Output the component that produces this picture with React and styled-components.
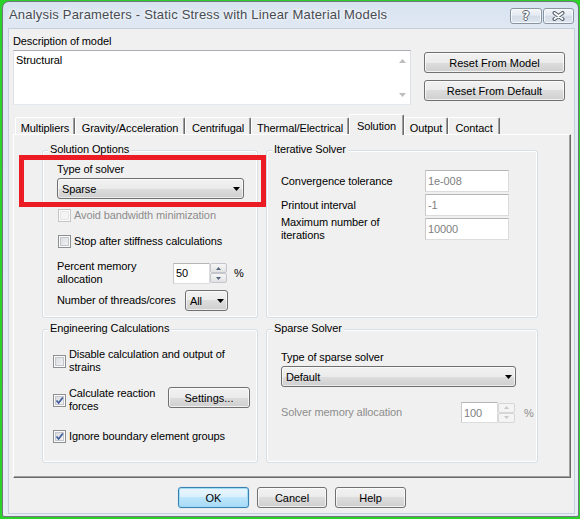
import React from 'react';
import styled, { createGlobalStyle } from 'styled-components';

const GlobalStyle = createGlobalStyle`
  html, body {
    margin: 0;
    padding: 0;
  }
  body {
    background: #2ad22a;
    font-family: "Liberation Sans", Arial, sans-serif;
    font-size: 11px;
    letter-spacing: -0.1px;
    color: #000;
    overflow: hidden;
  }
  * {
    box-sizing: border-box;
  }
`;

const Window = styled.div`
  width: 577px;
  height: 516px;
  margin: 1px 0 0 2px;
  display: flex;
  flex-direction: column;
  border: 1px solid #6f767d;
  border-radius: 7px 7px 2px 2px;
  background: linear-gradient(180deg, #d8e3f0 0px, #dfe8f3 26px, #e7edf5 100%);
`;

const TitleBar = styled.div`
  height: 26px;
  flex: none;
  display: flex;
  align-items: flex-start;
  padding-left: 6px;
`;

const Title = styled.div`
  margin-top: 5px;
  font-size: 13px;
  line-height: 16px;
  letter-spacing: 0.2px;
  color: #474b52;
  text-shadow: 0 0 6px #fff, 0 0 3px #fff;
  white-space: nowrap;
`;

const CaptionButtons = styled.div`
  margin: 6px 4px 0 auto;
  display: flex;
  gap: 1px;
`;

const CaptionBtn = styled.div`
  width: ${p => p.$w}px;
  height: 16px;
  border: 1px solid #8994a3;
  border-radius: 3px;
  background: linear-gradient(#f2f5fa, #e4eaf2 45%, #d4dce7 50%, #dee5ee);
  box-shadow: inset 0 0 0 1px rgba(255, 255, 255, 0.7);
  display: flex;
  align-items: center;
  justify-content: center;
`;

const HelpGlyph = styled.span`
  font-family: "DejaVu Sans", sans-serif;
  font-weight: bold;
  font-size: 12px;
  line-height: 12px;
  color: #fff;
  text-shadow: 1px 0 #565f6b, -1px 0 #565f6b, 0 1px #565f6b, 0 -1px #565f6b;
`;

const Client = styled.div`
  flex: 1;
  margin: 0 3px 2px 5px;
  border: 1px solid #c6d0dc;
  background: #f0f0f0;
  padding: 6px 3px 0 4px;
  display: flex;
  flex-direction: column;
`;

const TopSection = styled.div`
  display: grid;
  grid-template-columns: 398px 141px;
  column-gap: 13px;
`;

const Label = styled.div`
  line-height: 13px;
  white-space: nowrap;
`;

const TextBox = styled.div`
  height: 55px;
  margin-top: 2px;
  display: flex;
  background: #fff;
  border: 1px solid;
  border-color: #abadb3 #dbdfe6 #e3e9ef #e2e3ea;
`;

const TextContent = styled.div`
  flex: 1;
  padding: 3px 0 0 2px;
  line-height: 13px;
`;

const ScrollCol = styled.div`
  width: 16px;
  display: flex;
  flex-direction: column;
  align-items: center;
  justify-content: space-between;
  padding: 8px 0 7px;
`;

const SideButtons = styled.div`
  display: flex;
  flex-direction: column;
  gap: 7px;
  padding-top: 17px;
`;

const Button = styled.button`
  width: ${p => p.$w}px;
  height: 21px;
  padding: 0;
  font: inherit;
  color: #000;
  display: flex;
  align-items: center;
  justify-content: center;
  border: 1px solid ${p => (p.$primary ? '#3c7fb1' : '#707070')};
  border-radius: 3px;
  background: ${p =>
    p.$primary
      ? 'linear-gradient(#eaf6fd 0%, #d9f0fc 50%, #bee6fd 50%, #a7d9f5 100%)'
      : 'linear-gradient(#f2f2f2 0%, #ebebeb 50%, #dddddd 50%, #cfcfcf 100%)'};
  box-shadow: ${p =>
    p.$primary
      ? 'inset 0 0 0 1px #9fdcf8, 0 0 1px #5fb8e8'
      : 'inset 0 0 0 1px rgba(255, 255, 255, 0.7)'};
`;

const TabStrip = styled.div`
  height: 21px;
  margin: 9px 0 -1px 2px;
  display: flex;
  align-items: flex-end;
  position: relative;
  z-index: 1;
`;

const Tab = styled.div`
  width: ${p => p.$w}px;
  height: ${p => (p.$active ? 21 : 17)}px;
  margin-bottom: ${p => (p.$active ? 0 : 1)}px;
  padding-top: ${p => (p.$active ? 5 : 4)}px;
  line-height: 13px;
  text-align: center;
  white-space: nowrap;
  background: #f0f0f0;
  border-top: 1px solid #fff;
  border-left: 1px solid #fff;
  border-right: 1px solid #696969;
  border-radius: 2px 2px 0 0;
  box-shadow: inset -1px 0 0 #a0a0a0;
`;

const Panel = styled.div`
  position: relative;
  width: 558px;
  height: 344px;
  border: 1px solid;
  border-color: #fff #696969 #696969 #fff;
  box-shadow: inset -1px -1px 0 #a0a0a0;
  padding: 15px 0 0 28px;
`;

const Highlight = styled.div`
  position: absolute;
  left: 5px;
  top: 20px;
  width: 247px;
  height: 52px;
  border: 5px solid #ec1c24;
  pointer-events: none;
`;

const GroupGrid = styled.div`
  display: grid;
  grid-template-columns: 216px 272px;
  grid-template-rows: 168px 134px;
  column-gap: 8px;
  row-gap: 11px;
`;

const Group = styled.div`
  display: flex;
  flex-direction: column;
  border: 1px solid #d5dfe5;
  border-radius: 3px;
  box-shadow: inset 0 0 0 1px #fff;
`;

const Caption = styled.div`
  align-self: flex-start;
  margin: -8px 0 0 5px;
  padding: 0 2px;
  line-height: 13px;
  background: #f0f0f0;
  white-space: nowrap;
`;

const GroupBody = styled.div`
  display: flex;
  flex-direction: column;
  align-items: flex-start;
  padding-left: ${p => p.$pad}px;
`;

const Row = styled.div`
  display: flex;
  align-items: ${p => p.$align || 'center'};
  margin-top: ${p => p.$mt || 0}px;
`;

const Text = styled.span`
  flex: none;
  width: ${p => (p.$w ? `${p.$w}px` : 'auto')};
  line-height: 13px;
  white-space: nowrap;
  color: ${p => (p.$dim ? '#8d8d8d' : 'inherit')};
`;

const Combo = styled.div`
  width: ${p => p.$w}px;
  height: 21px;
  flex: none;
  display: flex;
  align-items: center;
  justify-content: space-between;
  padding: 0 3px 0 4px;
  border: 1px solid #707070;
  border-radius: 3px;
  background: linear-gradient(#f2f2f2 0%, #ebebeb 50%, #dddddd 50%, #cfcfcf 100%);
  box-shadow: inset 0 0 0 1px rgba(255, 255, 255, 0.6);
`;

const Input = styled.div`
  width: ${p => p.$w}px;
  height: ${p => p.$h || 21}px;
  flex: none;
  display: flex;
  align-items: center;
  padding-left: 2px;
  background: #fff;
  color: ${p => (p.$muted ? '#808080' : '#000')};
  border: 1px solid;
  border-color: #b5b5b5 #dcdcdc #dcdcdc #c9c9c9;
`;

const Spin = styled.div`
  width: 17px;
  height: 20px;
  flex: none;
  display: flex;
  flex-direction: column;
`;

const SpinBtn = styled.span`
  flex: 1;
  display: flex;
  align-items: center;
  justify-content: center;
  border: 1px solid ${p => (p.$off ? '#d6d6d6' : '#c3c6cc')};
  border-radius: 2px;
  background: ${p => (p.$off ? '#f4f4f4' : 'linear-gradient(#f6f6f6, #e2e2e2)')};
`;

const Percent = styled.span`
  margin-left: ${p => p.$gap}px;
  color: ${p => (p.$dim ? '#8d8d8d' : 'inherit')};
`;

const FieldGrid = styled.div`
  display: grid;
  grid-template-columns: 144px 84px;
  grid-auto-rows: 22px;
  row-gap: 2px;
  align-items: center;
  margin-top: 14px;
`;

const CheckRow = styled.label`
  display: flex;
  align-items: center;
  gap: 3px;
  margin-top: ${p => p.$mt || 0}px;
  margin-left: ${p => p.$indent || 0}px;
  color: ${p => (p.$disabled ? '#8d8d8d' : '#000')};
`;

const Box = styled.span`
  width: 13px;
  height: 13px;
  flex: none;
  display: flex;
  align-items: center;
  justify-content: center;
  border: 1px solid ${p => (p.$disabled ? '#c5c5c5' : '#8e8f8f')};
  background: ${p =>
    p.$disabled ? '#f4f4f4' : 'linear-gradient(135deg, #d3d6da, #f8f8f8)'};
  box-shadow: inset 0 0 0 1px #fbfbfb, inset 0 0 0 2px ${p => (p.$disabled ? '#e6e6e6' : '#c3c7cd')};
`;

const Footer = styled.div`
  display: flex;
  justify-content: center;
  gap: 8px;
  margin-top: 9px;
`;

const Triangle = ({ down = true, w = 7, h = 4, color = '#000' }) => (
  <svg width={w} height={h} viewBox={`0 0 ${w} ${h}`}>
    <path d={down ? `M0 0H${w}L${w / 2} ${h}Z` : `M0 ${h}H${w}L${w / 2} 0Z`} fill={color} />
  </svg>
);

const CloseGlyph = () => (
  <svg width="13" height="10" viewBox="0 0 13 10">
    <path d="M2.5 2L10.5 8M10.5 2L2.5 8" stroke="#56606c" strokeWidth="4" strokeLinecap="round" />
    <path d="M2.5 2L10.5 8M10.5 2L2.5 8" stroke="#fff" strokeWidth="1.8" strokeLinecap="round" />
  </svg>
);

const CheckMark = () => (
  <svg width="9" height="9" viewBox="0 0 9 9">
    <path d="M1.5 4.5L3.6 7L7.8 1.5" fill="none" stroke="#3f5b9c" strokeWidth="1.7" />
  </svg>
);

const Checkbox = ({ checked, disabled, children, mt, indent }) => (
  <CheckRow $mt={mt} $indent={indent} $disabled={disabled}>
    <Box $disabled={disabled}>{checked && <CheckMark />}</Box>
    {children}
  </CheckRow>
);

const Spinner = ({ off }) => (
  <Spin>
    <SpinBtn $off={off}>
      <Triangle down={false} w={5} h={3} color={off ? '#c8c8c8' : '#56657f'} />
    </SpinBtn>
    <SpinBtn $off={off}>
      <Triangle w={5} h={3} color={off ? '#c8c8c8' : '#56657f'} />
    </SpinBtn>
  </Spin>
);

const tabs = [
  { name: 'Multipliers', w: 60 },
  { name: 'Gravity/Acceleration', w: 110 },
  { name: 'Centrifugal', w: 66 },
  { name: 'Thermal/Electrical', w: 98 },
  { name: 'Solution', w: 55, active: true },
  { name: 'Output', w: 44 },
  { name: 'Contact', w: 52 },
];

const iterativeFields = [
  { label: 'Convergence tolerance', value: '1e-008' },
  { label: 'Printout interval', value: '-1' },
  { label: ['Maximum number of', 'iterations'], value: '10000' },
];

export default function App() {
  return (
    <>
      <GlobalStyle />
      <Window>
        <TitleBar>
          <Title>Analysis Parameters - Static Stress with Linear Material Models</Title>
          <CaptionButtons>
            <CaptionBtn $w={32}>
              <HelpGlyph>?</HelpGlyph>
            </CaptionBtn>
            <CaptionBtn $w={31}>
              <CloseGlyph />
            </CaptionBtn>
          </CaptionButtons>
        </TitleBar>

        <Client>
          <TopSection>
            <div>
              <Label>Description of model</Label>
              <TextBox>
                <TextContent>Structural</TextContent>
                <ScrollCol>
                  <Triangle down={false} color="#bdbdbd" />
                  <Triangle color="#bdbdbd" />
                </ScrollCol>
              </TextBox>
            </div>
            <SideButtons>
              <Button $w={141}>Reset From Model</Button>
              <Button $w={141}>Reset From Default</Button>
            </SideButtons>
          </TopSection>

          <TabStrip>
            {tabs.map(t => (
              <Tab key={t.name} $w={t.w} $active={t.active}>
                {t.name}
              </Tab>
            ))}
          </TabStrip>

          <Panel>
            <GroupGrid>
              <Group>
                <Caption>Solution Options</Caption>
                <GroupBody $pad={14}>
                  <Text style={{ marginTop: 7 }}>Type of solver</Text>
                  <Row $mt={2}>
                    <Combo $w={187}>
                      <span>Sparse</span>
                      <Triangle />
                    </Combo>
                  </Row>
                  <Checkbox disabled mt={10} indent={1}>
                    <Text>Avoid bandwidth minimization</Text>
                  </Checkbox>
                  <Checkbox mt={13} indent={1}>
                    <Text>Stop after stiffness calculations</Text>
                  </Checkbox>
                  <Row $mt={12}>
                    <Text $w={116}>
                      Percent memory
                      <br />
                      allocation
                    </Text>
                    <Input $w={37}>50</Input>
                    <Spinner />
                    <Percent $gap={7}>%</Percent>
                  </Row>
                  <Row $mt={4}>
                    <Text $w={128}>Number of threads/cores</Text>
                    <Combo $w={43}>
                      <span>All</span>
                      <Triangle />
                    </Combo>
                  </Row>
                </GroupBody>
              </Group>

              <Group>
                <Caption>Iterative Solver</Caption>
                <GroupBody $pad={14}>
                  <FieldGrid>
                    {iterativeFields.map(f => (
                      <React.Fragment key={f.value}>
                        <Text>
                          {Array.isArray(f.label) ? (
                            <>
                              {f.label[0]}
                              <br />
                              {f.label[1]}
                            </>
                          ) : (
                            f.label
                          )}
                        </Text>
                        <Input $w={84} $h={22} $muted>
                          {f.value}
                        </Input>
                      </React.Fragment>
                    ))}
                  </FieldGrid>
                </GroupBody>
              </Group>

              <Group>
                <Caption>Engineering Calculations</Caption>
                <GroupBody $pad={10}>
                  <Checkbox mt={13}>
                    <Text>
                      Disable calculation and output of
                      <br />
                      strains
                    </Text>
                  </Checkbox>
                  <Row $mt={13} $align="flex-start">
                    <Checkbox checked>
                      <Text $w={99}>
                        Calculate reaction
                        <br />
                        forces
                      </Text>
                    </Checkbox>
                    <Button $w={82}>Settings...</Button>
                  </Row>
                  <Checkbox checked mt={17}>
                    <Text>Ignore boundary element groups</Text>
                  </Checkbox>
                </GroupBody>
              </Group>

              <Group>
                <Caption>Sparse Solver</Caption>
                <GroupBody $pad={14}>
                  <Text style={{ marginTop: 16 }}>Type of sparse solver</Text>
                  <Row $mt={2}>
                    <Combo $w={235}>
                      <span>Default</span>
                      <Triangle />
                    </Combo>
                  </Row>
                  <Row $mt={15}>
                    <Text $w={180} $dim>
                      Solver memory allocation
                    </Text>
                    <Input $w={37} $muted>
                      100
                    </Input>
                    <Spinner off />
                    <Percent $gap={9} $dim>
                      %
                    </Percent>
                  </Row>
                </GroupBody>
              </Group>
            </GroupGrid>
            <Highlight />
          </Panel>

          <Footer>
            <Button $w={71} $primary>
              OK
            </Button>
            <Button $w={70}>Cancel</Button>
            <Button $w={71}>Help</Button>
          </Footer>
        </Client>
      </Window>
    </>
  );
}
